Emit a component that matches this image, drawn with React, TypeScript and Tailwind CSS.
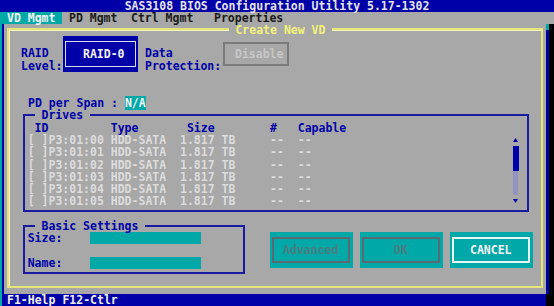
import React from 'react';

const BLUE = 'text-[#0000a8]';

const drives = ['00', '01', '02', '03', '04', '05'];

function Triangle({ down }: { down?: boolean }) {
  return (
    <svg width="5" height="4" viewBox="0 0 5 4">
      <path d={down ? 'M0 0 L5 0 L2.5 4 Z' : 'M2.5 0 L5 4 L0 4 Z'} fill="#0000a8" />
    </svg>
  );
}

function Btn({ label, active }: { label: string; active?: boolean }) {
  return (
    <div className="w-[83px] h-[36px] bg-[#00a8a8] pt-[5px] pb-[5.5px] pl-[2px] pr-[3.5px]">
      <div
        className={
          active
            ? 'h-full border-2 border-[#e8f6f6] text-[#f4f4f4] flex items-center justify-center'
            : 'h-full border-2 border-[#5a6a72] text-[#4e7c80] flex items-center justify-center'
        }
      >
        {label}
      </div>
    </div>
  );
}

export default function App() {
  return (
    <div className="w-[554px] h-[306px] overflow-hidden flex flex-col bg-[#a8a8a8] font-['DejaVu_Sans_Mono',monospace] font-bold text-[11.5px] leading-[12.24px] whitespace-pre">
      {/* title bar */}
      <div className="h-[12.24px] shrink-0 bg-[#0000a8] text-[#e4e4ec] text-center">
        SAS3108 BIOS Configuration Utility 5.17-1302
      </div>

      {/* menu */}
      <div className="h-[12.24px] shrink-0 flex text-[#1a1a1a]">
        <div className="w-[62px] pl-[7px] bg-[#00a8a8] text-[#f4f4f4]">VD Mgmt</div>
        <div className="ml-[7px] w-[62px]">PD Mgmt</div>
        <div className="w-[83px]">Ctrl Mgmt</div>
        <div>Properties</div>
      </div>

      <div className="flex flex-1 min-h-0">
        {/* left edge of the panel behind */}
        <div className="w-[2px] bg-[#00a8a8]" />
        <div className="w-[2px] bg-[#0000a8]" />

        {/* dialog */}
        <div className="flex-1 flex pt-[4px] pl-[3px] pr-[3px] pb-[6px]">
          <div className="relative flex-1 flex flex-col border-2 border-[#e6e678] shadow-[inset_1px_1px_0_#f4f4bc]">
            <div className="absolute left-[219.5px] top-[-5.5px] leading-[10px] bg-[#a8a8a8] text-[#f2f27a]">{' Create New VD '}</div>

            {/* raid level / protection */}
            <div className={`flex items-start mt-[6px] ${BLUE}`}>
              <div className="ml-[12px] w-[42px] pt-[11px]">
                <div>RAID</div>
                <div>Level:</div>
              </div>
              <div className="w-[75px] h-[36px] bg-[#0000a8] pt-[5px] pb-[5px] px-[2px]">
                <div className="h-full border border-[#d8d8f0] text-[#f4f4f4] pl-[17px] flex items-center">RAID-0</div>
              </div>
              <div className="ml-[7px] w-[78px] pt-[11px]">
                <div>Data</div>
                <div>Protection:</div>
              </div>
              <div className="mt-[6px] w-[66px] h-[24px] border-2 border-[#7a7a7a] pl-[10px] flex items-center text-[#c6c6c6]">
                Disable
              </div>
            </div>

            {/* pd per span */}
            <div className={`mt-[25px] ml-[19px] h-[12.24px] ${BLUE}`}>
              {'PD per Span : '}
              <span className="bg-[#00a8a8] text-[#f4f4f4]">N/A</span>
            </div>

            {/* drives */}
            <div className="relative mt-[4.76px] ml-[14px] w-[506px] h-[98px] shrink-0 border-2 border-[#1a1aa0] flex pt-[5.4px] pl-[2.7px]">
              <div className={`absolute left-[9.6px] top-[-6px] leading-[10px] bg-[#a8a8a8] ${BLUE}`}>{' Drives '}</div>
              <div className="flex-1">
                <div className={BLUE}>{' ID         Type       Size        #   Capable'}</div>
                {drives.map(d => (
                  <div key={d} className="text-[#dcdcdc]">
                    {`[ ]P3:01:${d} HDD-SATA  1.817 TB     --  --`}
                  </div>
                ))}
              </div>
              <div className="mt-[12.24px] mr-[7.6px] w-[6.9px] flex flex-col items-center">
                <div className="h-[12.24px] flex items-center">
                  <Triangle />
                </div>
                <div className="h-[24.5px] w-[6px] bg-[#0000a8]" />
                <div className="h-[24.5px] w-[5px] bg-[#9494c2]" />
                <div className="h-[12.24px] flex items-center">
                  <Triangle down />
                </div>
              </div>
            </div>

            {/* basic settings + buttons */}
            <div className="flex items-start mt-[13px]">
              <div className={`relative ml-[14px] w-[222px] h-[49px] border-2 border-[#1a1aa0] pt-[4.6px] pl-[2.7px] ${BLUE}`}>
                <div className="absolute left-[9.6px] top-[-6px] leading-[10px] bg-[#a8a8a8]">{' Basic Settings '}</div>
                <div className="flex">
                  <div className="w-[62.3px]">Size:</div>
                  <div className="w-[110.8px] h-[12.24px] bg-[#00a8a8]" />
                </div>
                <div className="h-[12.24px]" />
                <div className="flex">
                  <div className="w-[62.3px]">Name:</div>
                  <div className="w-[110.8px] h-[12.24px] bg-[#00a8a8]" />
                </div>
              </div>
              <div className="ml-[25px] mt-[7px] flex gap-[7px]">
                <Btn label="Advanced" />
                <Btn label="OK" />
                <Btn label="CANCEL" active />
              </div>
            </div>
          </div>
        </div>

        {/* right edge */}
        <div className="w-[8px] flex">
          <div className="w-[2.5px] flex flex-col">
            <div className="h-[6px] bg-[#00a8a8]" />
            <div className="flex-1 bg-[#0000a8]" />
          </div>
          <div className="flex-1 bg-black" />
        </div>
      </div>

      {/* status bar */}
      <div className="h-[12.24px] shrink-0 flex">
        <div className="w-[2px] bg-[#00a8a8]" />
        <div className="flex-1 bg-[#0000a8] text-[#f0f0f0] pl-[5px]">F1-Help F12-Ctlr</div>
        <div className="w-[8px] bg-black" />
      </div>
    </div>
  );
}
